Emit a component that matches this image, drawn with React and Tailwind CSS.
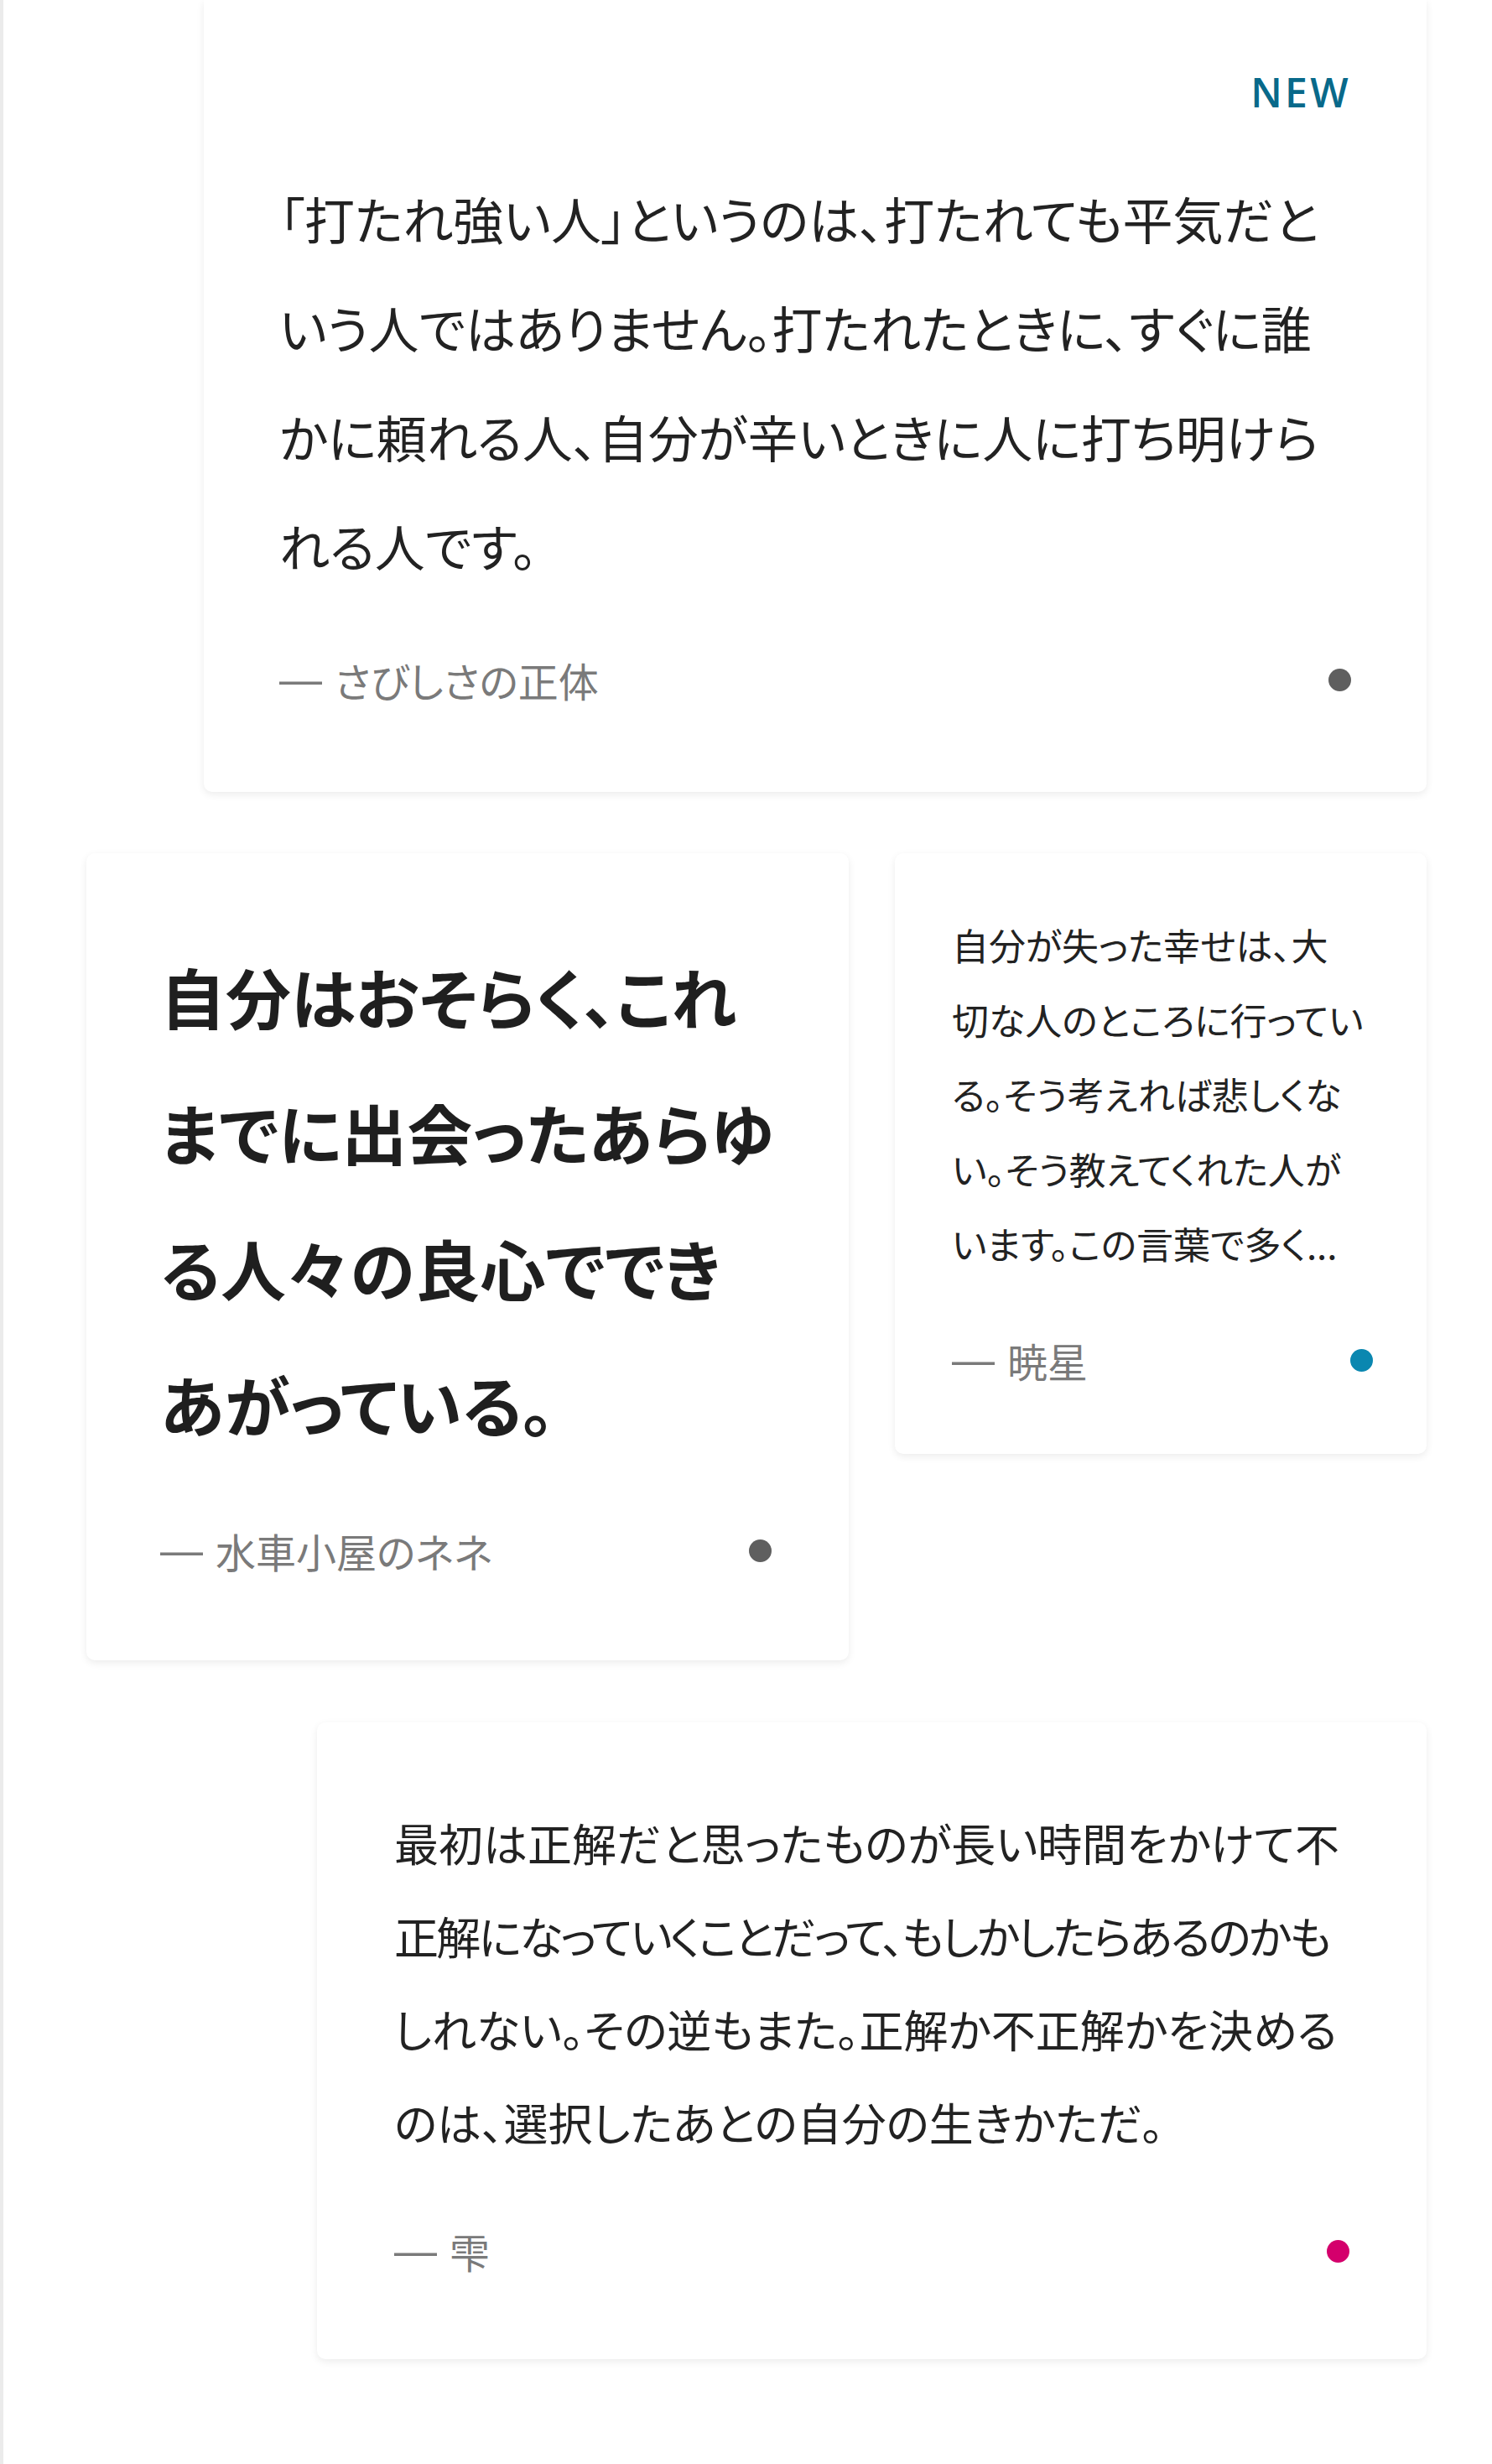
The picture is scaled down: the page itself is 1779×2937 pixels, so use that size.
import React from "react";

const Dot = ({ color }) => (
  <span className={`block size-[27px] shrink-0 rounded-full ${color}`} />
);

const Byline = ({ author, dot, gap }) => (
  <div className={`flex h-[80px] items-center justify-between ${gap}`}>
    <span className="flex items-center gap-[15px] text-[48px] leading-[80px] text-[#7a7a7a]">
      <span className="font-['Liberation_Sans',sans-serif] text-[51px] [font-feature-settings:normal]">—</span>
      <span>{author}</span>
    </span>
    <Dot color={dot} />
  </div>
);

// each line is laid out as in the original, no automatic wrapping
const Lines = ({ lines, className }) => (
  <p className={className}>
    {lines.map((line) => {
      const text = typeof line === "string" ? line : line.text;
      const extra = typeof line === "string" ? "" : line.className;
      return (
        <span key={text} className={`block whitespace-nowrap ${extra}`}>
          {text}
        </span>
      );
    })}
  </p>
);

export default function App() {
  return (
    <div className="min-h-[2937px] border-l-4 border-[#ebebeb] bg-white font-['Noto_Sans_CJK_JP','Noto_Sans',sans-serif] text-[#222] [font-feature-settings:'palt']">
      <div className="pb-[121px] pl-[99px] pr-[78px]">
        {/* featured quote, top edge scrolled off */}
        <article className="ml-[140px] rounded-b-[10px] bg-white px-[90px] pb-[94px] pt-[86px] shadow-[0_3px_10px_rgba(0,0,0,0.08)]">
          <div className="mb-[61px] flex justify-end">
            <span className="font-['Open_Sans',sans-serif] text-[48px] font-semibold leading-[48px] tracking-[0.07em] text-[#08698a]">
              NEW
            </span>
          </div>
          <Lines
            className="text-[60px] leading-[130px]"
            lines={[
              "「打たれ強い人」というのは、打たれても平気だと",
              "いう人ではありません。打たれたときに、すぐに誰",
              "かに頼れる人、自分が辛いときに人に打ち明けら",
              "れる人です。",
            ]}
          />
          <Byline author="さびしさの正体" dot="bg-[#5f5f5f]" gap="mt-[55px]" />
        </article>

        <div className="mt-[73px] flex items-start gap-[55px]">
          <article className="w-[909px] shrink-0 rounded-[10px] bg-white pb-[91px] pl-[88px] pr-[92px] pt-[89px] shadow-[0_3px_10px_rgba(0,0,0,0.08)]">
            <Lines
              className="text-[78px] font-bold leading-[162px] text-[#1f1f1f]"
              lines={[
                "自分はおそらく、これ",
                "までに出会ったあらゆ",
                "る人々の良心ででき",
                "あがっている。",
              ]}
            />
            <Byline author="水車小屋のネネ" dot="bg-[#5f5f5f]" gap="mt-[54px]" />
          </article>

          <article className="flex-1 rounded-[10px] bg-white pb-[72px] pl-[68px] pr-[64px] pt-[65px] shadow-[0_3px_10px_rgba(0,0,0,0.08)]">
            <Lines
              className="text-[44px] leading-[89px]"
              lines={[
                "自分が失った幸せは、大",
                "切な人のところに行ってい",
                "る。そう考えれば悲しくな",
                "い。そう教えてくれた人が",
                "います。この言葉で多く...",
              ]}
            />
            <Byline author="暁星" dot="bg-[#0a87b0]" gap="mt-[54px]" />
          </article>
        </div>

        <article className="ml-[275px] mt-[74px] rounded-[10px] bg-white px-[92px] pb-[89px] pt-[88px] shadow-[0_3px_10px_rgba(0,0,0,0.08)]">
          <Lines
            className="text-[53px] leading-[111px]"
            lines={[
              "最初は正解だと思ったものが長い時間をかけて不",
              {
                text: "正解になっていくことだって、もしかしたらあるのかも",
                className: "tracking-[-0.05em]",
              },
              "しれない。その逆もまた。正解か不正解かを決める",
              "のは、選択したあとの自分の生きかただ。",
            ]}
          />
          <Byline author="雫" dot="bg-[#d4006c]" gap="mt-[58px]" />
        </article>
      </div>
    </div>
  );
}
